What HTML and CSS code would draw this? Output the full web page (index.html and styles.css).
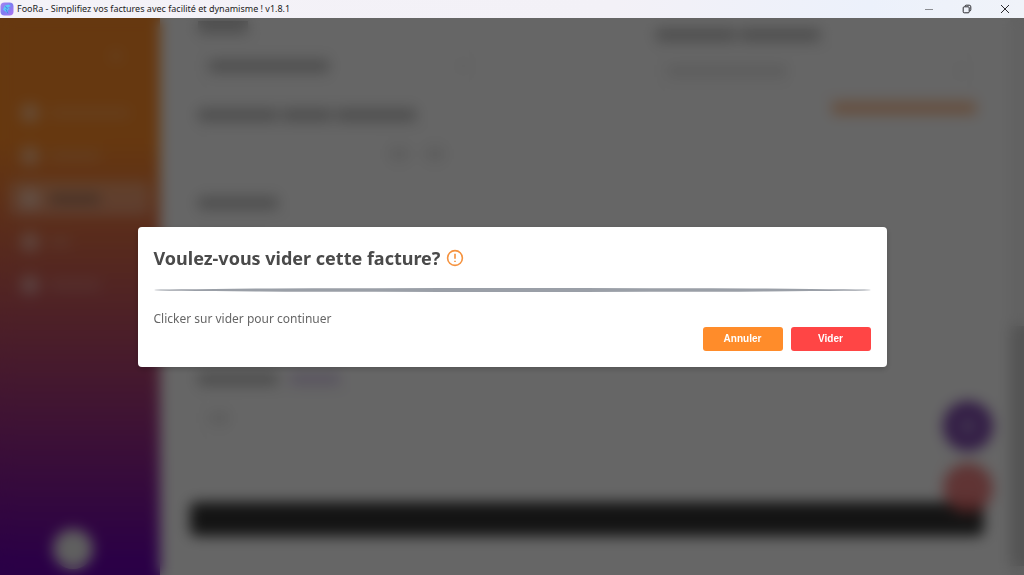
FILE: index.html
```html
<!DOCTYPE html>
<html lang="fr">
<head>
    <meta charset="UTF-8">
    <meta name="viewport" content="width=device-width, initial-scale=1.0">
    <title>FooRa</title>
    <link rel="stylesheet" href="styles.css">
</head>
<body>
    <header class="titlebar">
        <svg class="app-logo" viewBox="0 0 14 14" aria-hidden="true">
            <defs>
                <linearGradient id="logoBg" x1="0" y1="0" x2="1" y2="1">
                    <stop offset="0" stop-color="#a884f2"/>
                    <stop offset="0.5" stop-color="#7f7cf0"/>
                    <stop offset="1" stop-color="#b274f4"/>
                </linearGradient>
            </defs>
            <rect x="0.5" y="0.5" width="13" height="13" rx="4" fill="url(#logoBg)"/>
            <path d="M3 7.5 5 3.5 8.5 2.5 11 4 8 5.5 10 7 7.5 8 8.5 12 5.5 9.5Z" fill="#5bc8f5"/>
            <path d="M5 4.5 7.5 6 6 7.5 8 11.5" fill="none" stroke="#4a6fe0" stroke-width="0.8"/>
        </svg>
        <span class="window-title">FooRa - Simplifiez vos factures avec facilité et dynamisme ! v1.8.1</span>
        <div class="window-controls">
            <button type="button" aria-label="Réduire">
                <svg viewBox="0 0 10 10"><path d="M1 5.5H9" stroke="#8b8d92"/></svg>
            </button>
            <button type="button" aria-label="Restaurer">
                <svg viewBox="0 0 10 10"><rect x="1.2" y="2.8" width="6" height="6" rx="1"/><path d="M3 2.4Q3 1.2 4.2 1.2H7.2Q8.8 1.2 8.8 2.8V5.8Q8.8 7 7.6 7"/></svg>
            </button>
            <button type="button" aria-label="Fermer">
                <svg viewBox="0 0 10 10"><path d="M1 1 9 9M9 1 1 9"/></svg>
            </button>
        </div>
    </header>

    <div class="app">
        <!-- Page behind the dialog -->
        <div class="page" aria-hidden="true" inert>
            <aside class="sidebar">
                <span class="collapse"></span>
                <nav class="menu">
                    <div class="menu-item"><i class="dot"></i><i class="bar w-80"></i></div>
                    <div class="menu-item"><i class="dot"></i><i class="bar w-50"></i></div>
                    <div class="menu-item active"><i class="dot"></i><i class="bar w-50"></i></div>
                    <div class="menu-item"><i class="dot"></i><i class="bar w-20"></i></div>
                    <div class="menu-item"><i class="dot"></i><i class="bar w-50"></i></div>
                </nav>
                <span class="avatar"></span>
            </aside>

            <main class="content">
                <form class="form">
                    <div class="column">
                        <div class="group">
                            <div class="label"><i class="line w-50"></i></div>
                            <div class="field"><i class="line w-120"></i><i class="caret"></i></div>
                        </div>
                        <div class="group">
                            <div class="label"><i class="line w-80"></i><i class="line w-50"></i><i class="line w-80"></i></div>
                            <div class="field right"><i class="line faint w-20"></i><i class="line faint w-20"></i></div>
                        </div>
                        <div class="group">
                            <div class="label"><i class="line w-80"></i></div>
                            <div class="field"><i class="line w-50"></i></div>
                        </div>
                        <div class="group">
                            <div class="label"><i class="line w-80"></i></div>
                            <div class="field"></div>
                        </div>
                        <div class="group">
                            <div class="label spaced"><i class="line w-80"></i><i class="line purple w-50"></i></div>
                            <div class="field"><i class="line faint w-20"></i></div>
                        </div>
                    </div>
                    <div class="column client">
                        <div class="group">
                            <div class="label"><i class="line w-80"></i><i class="line w-80"></i></div>
                            <div class="field"><i class="line faint w-120"></i><i class="caret"></i></div>
                        </div>
                        <i class="line orange"></i>
                    </div>
                </form>
                <div class="total-bar"></div>
            </main>
            <div class="scrollbar"><span class="thumb"></span></div>
            <div class="fabs">
                <span class="fab fab-purple"></span>
                <span class="fab fab-red"></span>
            </div>
        </div>

        <div class="overlay">
            <section class="modal" role="dialog" aria-modal="true" aria-labelledby="modalTitle">
                <h1 id="modalTitle">
                    Voulez-vous vider cette facture?
                    <svg viewBox="0 0 18 18" aria-hidden="true">
                        <circle cx="9" cy="9" r="7.4"/>
                        <path d="M9 4.8V9.8M9 11.8V13"/>
                    </svg>
                </h1>
                <hr>
                <p>Clicker sur vider pour continuer</p>
                <div class="actions">
                    <button type="button" class="btn btn-cancel">Annuler</button>
                    <button type="button" class="btn btn-danger">Vider</button>
                </div>
            </section>
        </div>
    </div>
</body>
</html>
```
FILE: styles.css
```css
* {
    box-sizing: border-box;
}

body {
    margin: 0;
    height: 100vh;
    display: flex;
    flex-direction: column;
    overflow: hidden;
    font-family: "Noto Sans", "Open Sans", sans-serif;
    color: #4a4a4a;
}

/* Window title bar */
.titlebar {
    display: flex;
    align-items: center;
    gap: 3px;
    height: 18px;
    flex-shrink: 0;
    background: linear-gradient(90deg, #f4f2f8, #f3f1f7 60%, #ecf1fb 85%, #f0f3f9);
}

.app-logo {
    width: 14px;
    height: 14px;
}

.window-title {
    font-family: "Noto Sans", sans-serif;
    font-size: 9px;
    line-height: 18px;
    color: #1c1c1c;
    white-space: nowrap;
}

.window-controls {
    display: flex;
    margin-left: auto;
}

.window-controls button {
    display: flex;
    align-items: center;
    justify-content: center;
    width: 38px;
    height: 18px;
    padding: 0;
    border: none;
    background: none;
}

.window-controls svg {
    width: 10px;
    height: 10px;
    fill: none;
    stroke: #2b2b2f;
}

/* Page */
.app {
    position: relative;
    flex: 1;
    min-height: 0;
}

.page {
    display: flex;
    height: 100%;
    background: #fff;
    overflow: hidden;
}

.sidebar {
    display: flex;
    flex-direction: column;
    width: 160px;
    flex-shrink: 0;
    padding: 32px 10px 6px;
    background: linear-gradient(180deg, #ff8c28 22%, #6a00b0 98%);
}

.collapse {
    align-self: flex-end;
    width: 12px;
    height: 12px;
    margin-right: 28px;
    border-radius: 50%;
    background: rgba(255, 255, 255, 0.2);
}

.menu {
    display: flex;
    flex-direction: column;
    gap: 8px;
    margin-top: 33px;
}

.menu-item {
    display: flex;
    align-items: center;
    gap: 10px;
    height: 35px;
    padding: 0 10px;
    border-radius: 6px;
}

.menu-item.active {
    background: rgba(255, 255, 255, 0.28);
}

.dot {
    width: 20px;
    height: 20px;
    border-radius: 50%;
    background: rgba(255, 255, 255, 0.42);
}

.bar {
    height: 10px;
    background: rgba(255, 255, 255, 0.16);
}

.active .bar {
    background: rgba(60, 60, 60, 0.36);
}

.avatar {
    align-self: center;
    width: 40px;
    height: 40px;
    margin: auto 14px 0 0;
    border-radius: 50%;
    background: #eee;
}

.content {
    flex: 1;
    padding: 0 26px 0 30px;
}

.form {
    display: flex;
    justify-content: space-between;
    height: 442px;
    padding: 0 8px;
    border-bottom: 1px solid #eee;
}

.column {
    width: 280px;
}

.client {
    display: flex;
    flex-direction: column;
    width: 320px;
    padding-top: 8px;
}

.group {
    margin-bottom: 16px;
}

.label {
    display: flex;
    align-items: center;
    gap: 4px;
    height: 18px;
    margin-bottom: 6px;
}

.label.spaced {
    gap: 12px;
}

.field {
    display: flex;
    align-items: center;
    gap: 16px;
    height: 48px;
    padding: 0 10px;
    border: 1px solid #ececec;
    border-radius: 4px;
}

.client .field {
    height: 42px;
}

.field.right {
    justify-content: flex-end;
    padding-right: 32px;
}

.client .group {
    margin-bottom: 10px;
}

.line {
    height: 12px;
    background: #bdbdbd;
}

.line.faint {
    background: #e6e6e6;
}

.line.purple {
    background: #ddd0ee;
}

.line.orange {
    align-self: flex-end;
    width: 144px;
    background: #ffbe90;
}

.caret {
    width: 8px;
    height: 8px;
    margin-left: auto;
    background: #eee;
}

.w-20 {
    width: 20px;
}

.w-50 {
    width: 50px;
}

.w-80 {
    width: 80px;
}

.w-120 {
    width: 120px;
}

.total-bar {
    height: 34px;
    margin-top: 42px;
    border-radius: 6px;
    background: #333;
}

.scrollbar {
    width: 14px;
    padding-top: 308px;
    background: #f3f3f3;
}

.thumb {
    display: block;
    height: 240px;
    background: #d0d0d0;
}

/* Floating action buttons */
.fabs {
    position: absolute;
    right: 31px;
    bottom: 62px;
    display: flex;
    flex-direction: column;
    gap: 12px;
}

.fab {
    width: 50px;
    height: 50px;
    border-radius: 50%;
}

.fab-purple {
    background: radial-gradient(circle, #a583c8 3px, #7c45ab 14px);
}

.fab-red {
    background: rgba(235, 100, 100, 0.8);
}

/* Dialog */
.overlay {
    position: absolute;
    inset: 0;
    display: flex;
    align-items: center;
    justify-content: center;
    padding: 16px;
    background: rgba(0, 0, 0, 0.6);
    backdrop-filter: blur(7px);
}

.modal {
    width: 100%;
    max-width: 749px;
    padding: 16px;
    border-radius: 4px;
    background: #fff;
    box-shadow: 0 2px 6px rgba(0, 0, 0, 0.2);
}

.modal h1 {
    display: flex;
    align-items: center;
    gap: 6px;
    margin: 0 0 15px;
    font-size: 18px;
    line-height: 30px;
    font-weight: 700;
}

.modal h1 svg {
    width: 18px;
    height: 18px;
    fill: none;
    stroke: #f5923e;
    stroke-width: 1.6;
}

.modal hr {
    height: 4px;
    margin: 0 0 17px;
    border: none;
    border-radius: 50%;
    background: #9a9fa7;
}

.modal p {
    margin: 0;
    font-size: 12px;
    line-height: 20px;
    color: #666;
}

.actions {
    display: flex;
    justify-content: flex-end;
    gap: 8px;
    margin-top: -2px;
}

.btn {
    width: 80px;
    height: 24px;
    padding: 0;
    border: none;
    border-radius: 3px;
    font-family: "Liberation Sans", Arial, sans-serif;
    font-size: 10px;
    font-weight: 700;
    color: #fff;
    cursor: pointer;
}

.btn-cancel {
    background: #ff8c2a;
}

.btn-danger {
    background: #ff4545;
}
```
